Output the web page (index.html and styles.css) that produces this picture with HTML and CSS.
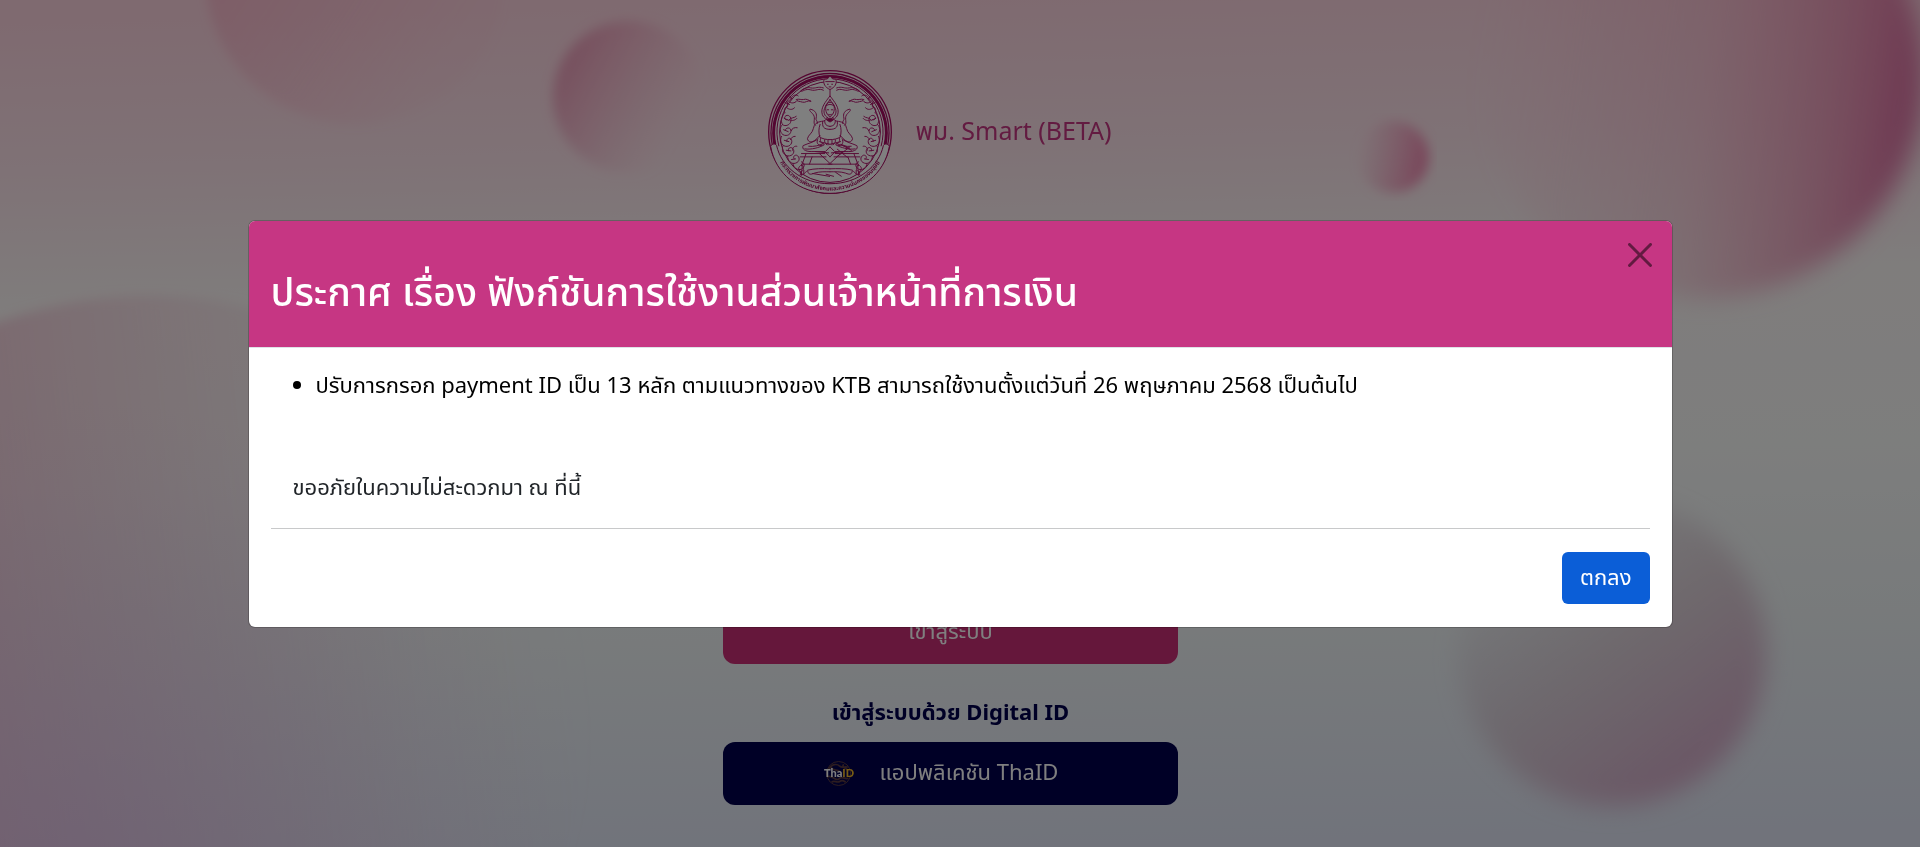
FILE: index.html
```html
<!DOCTYPE html>
<html lang="th">
<head>
<meta charset="utf-8">
<meta name="viewport" content="width=device-width, initial-scale=1">
<title>พม. Smart (BETA)</title>
<link rel="stylesheet" href="styles.css">
</head>
<body>
<svg class="backdrop-art" viewBox="0 0 1920 847" preserveAspectRatio="none" aria-hidden="true">
  <defs>
    <linearGradient id="sky" x1="0.47" y1="0" x2="0.53" y2="1">
      <stop offset="0" stop-color="#ffd5e1"/><stop offset="0.17" stop-color="#ffe4ec"/><stop offset="0.34" stop-color="#fffaf9"/><stop offset="0.55" stop-color="#fbfcfb"/><stop offset="0.75" stop-color="#f0f5f7"/><stop offset="1" stop-color="#e2e7f6"/>
    </linearGradient>
    <linearGradient id="orbA" x1="0.1" y1="0.3" x2="0.8" y2="0.75"><stop offset="0" stop-color="#f587a8" stop-opacity=".34"/><stop offset="1" stop-color="#f587a8" stop-opacity=".06"/></linearGradient>
    <linearGradient id="orbB" x1="0" y1="0.25" x2="0.85" y2="0.7"><stop offset="0" stop-color="#e06c98" stop-opacity=".6"/><stop offset="1" stop-color="#f4aac4" stop-opacity="0"/></linearGradient>
    <linearGradient id="orbC" x1="0" y1="0.4" x2="1" y2="0.6"><stop offset="0" stop-color="#f08cb4" stop-opacity="0"/><stop offset="1" stop-color="#f06ca0" stop-opacity=".8"/></linearGradient>
    <linearGradient id="orbD" x1="0" y1="0.38" x2="1" y2="0.52"><stop offset="0" stop-color="#f090b4" stop-opacity="0"/><stop offset=".5" stop-color="#f08cac" stop-opacity=".26"/><stop offset=".8" stop-color="#e474a0" stop-opacity=".6"/><stop offset="1" stop-color="#d8649c" stop-opacity=".92"/></linearGradient>
    <linearGradient id="orbE" x1="0" y1="0.55" x2="1" y2="0.45"><stop offset="0" stop-color="#f08cb0" stop-opacity=".6"/><stop offset=".2" stop-color="#f094b6" stop-opacity=".52"/><stop offset=".8" stop-color="#e8b8cc" stop-opacity=".08"/><stop offset="1" stop-color="#e8b8cc" stop-opacity="0"/></linearGradient>
    <linearGradient id="orbF" x1="0.2" y1="0.1" x2="0.8" y2="0.85"><stop offset="0" stop-color="#c8b8c4" stop-opacity="0"/><stop offset=".5" stop-color="#d0b8c4" stop-opacity=".55"/><stop offset="1" stop-color="#d4a4c4" stop-opacity=".85"/></linearGradient>
    <radialGradient id="violet"><stop offset="0" stop-color="#dcbcec" stop-opacity=".5"/><stop offset="1" stop-color="#e0c8ee" stop-opacity="0"/></radialGradient>
    <filter id="soft4"><feGaussianBlur stdDeviation="6"/></filter>
    <filter id="soft8"><feGaussianBlur stdDeviation="12"/></filter>
  </defs>
  <rect width="1920" height="847" fill="url(#sky)"/>
  <ellipse cx="150" cy="720" rx="440" ry="424" fill="url(#orbE)" filter="url(#soft4)"/>
  <circle cx="80" cy="880" r="480" fill="url(#violet)"/>
  <circle cx="355" cy="-26" r="150" fill="url(#orbA)" filter="url(#soft4)"/>
  <circle cx="629" cy="97" r="76" fill="url(#orbB)" filter="url(#soft4)"/>
  <circle cx="1393" cy="157" r="36" fill="url(#orbC)" filter="url(#soft4)"/>
  <circle cx="1702" cy="76" r="222" fill="url(#orbD)" filter="url(#soft8)"/>
  <circle cx="1612" cy="652" r="154" fill="url(#orbF)" filter="url(#soft8)"/>
</svg>

<main class="login">
  <header class="brand">
    <svg class="seal" viewBox="14 11 380 380" role="img" aria-label="ตรากระทรวง">
      <defs>
        <path id="motto" d="M38 262A177 177 0 0 0 370 262"/>
        <g id="half" fill="none" stroke="#b41a70" stroke-width="3" stroke-linecap="round" stroke-linejoin="round">
          <path d="M184 75c-14-8-22 4-38-1s-24 6-31 4c9-10 22-12 31-10 16 3 20-6 38 0M146 108c-10-4-16 6-25 3s-17-2-19-8c9-3 16 2 22 0 10-3 14 2 22 5M108 92c-8-7-21 0-22 12-8 0-14 10-9 19-9 2-14 12-9 20M81 110c5 5 17 5 22-2M72 126c8 9 19 9 25 2M66 144c-8 12-12 23-5 35 9 6 20 1 24-7 5-13-4-25-14-20-8 5-2 15 4 12M61 178c-10 9-9 23 1 31 13 7 26-2 24-14-2-9-16-8-17 1M58 214c-7 12-1 27 11 30 15 3 25-12 17-22-6-6-15 1-12 8M62 243c-5 14 1 27 14 30 17 2 24-14 15-23-7-5-15 0-12 8M76 274c0 14 12 25 24 21 14-4 14-20 3-24-8-1-12 7-6 12M92 296c2 13 14 22 26 17 11-6 11-20 0-22M102 154c-7 6-17 3-21 10 9 5 19 1 23-4M105 188c-8-2-16 2-18 9M99 214c-6-1-12 4-14 10M104 244c-7-2-14 4-13 12M66 160l14 6m-16 28l14 6m-12 26l14 4m-8 26l14 2m2 26l12-2m-24-190l12 8m-20 12l14 6"/>
          <path d="M114 303c-8 6-5 14 3 18 7-3 10-11 5-18zM118 321v10m7-14v11"/>
          <path d="M204 92c-13 18-30 36-23 57 4 10 12 16 23 17M204 103c-10 16-22 28-17 43 2 6 6 10 10 12M191 125c0-8 5-13 13-14M191 125c-1 14 4 27 13 30M196 134h4m-2 13c2 2 4 2 6 2M192 122c4-3 8-4 12-4"/>
          <path d="M196 157c-2 8-8 11-18 12-14 2-22 8-24 21-2 14-16 20-18 31 2 12 14 12 24 4l14-14M174 178c-5 13-4 26-1 38M182 169c-2 16 2 24 22 24M188 168c0 10 5 15 16 16M160 181c-10-7 2-20-6-32-8-10-14-12-10-17 16 3 22 15 18 27-2 8 6 8 4 16M173 216c8 6 20 8 31 8M168 222c-12 10-30 13-45 20-5 10 6 18 24 18h43l14-14M172 230l32 8M166 226c-4 9 4 17 14 16m-4-22c-4 9 2 16 10 18m2-14c-2 7 2 12 6 15m4-14v15M128 252c20 3 44-4 58-12M140 244c16 2 30-2 44-8"/>
          <path d="M118 266h70M114 276h78M132 266l-12 32h90M190 262l14 14M172 266l32 30M150 276l-8 22M118 298c6 12-1 20-4 32 12 2 15-8 23-14 20-5 43-5 67-4M137 320c2 10 8 10 20 5 15-5 31-4 47-4M160 260l40 4"/>
        </g>
      </defs>
      <circle cx="204" cy="201" r="181" fill="#ffffff"/>
      <g fill="none" stroke="#a80c62">
        <circle cx="204" cy="201" r="185" stroke-width="4"/>
        <path d="M30 240A178 178 0 1 1 378 240" stroke-width="4"/>
        <path d="M38 240A170 170 0 1 1 370 240" stroke-width="9"/>
        <path d="M50 244A160 160 0 1 1 358 244" stroke-width="3"/>
        <circle cx="204" cy="201" r="152" stroke-width="3"/>
      </g>
      <path d="M25 244c4-8 14-9 18-2 14 62 74 115 161 115s147-53 161-115c4-7 14-6 18 2-14 83-86 142-179 142S39 327 25 244z" fill="#ffffff" stroke="#a80c62" stroke-width="3"/>
      <use href="#half"/>
      <use href="#half" transform="translate(408 0) scale(-1 1)"/>
      <g fill="none" stroke="#b41a70" stroke-width="3">
        <path fill="#ffffff" d="M204 32l-8 9-10 1c-3 14 3 24 18 31 15-7 21-17 18-31l-10-1z"/>
        <path d="M190 49h28M195 57h5m8 0h5m-13 8h8M204 73v18"/>
        <path fill="#a80f60" d="M198 160h12l4 5-10 6-10-6z"/>
        <path d="M236 238l27 15m-38-1l32 26m-20-40c13 5 24 9 33 21M224 276l40-30M150 326l54 9m-13-7l25 7m4-13l19 13"/>
      </g>
      <text class="seal-text"><textPath href="#motto" startOffset="50%" text-anchor="middle">กระทรวงการพัฒนาสังคมและความมั่นคงของมนุษย์</textPath></text>
    </svg>
    <h1 class="brand-name">พม. Smart (BETA)</h1>
  </header>
  <div class="actions">
    <button class="btn btn-login" type="button">เข้าสู่ระบบ</button>
    <h2 class="digital-title">เข้าสู่ระบบด้วย Digital ID</h2>
    <button class="btn btn-thaid" type="button">
      <svg class="thaid-logo" viewBox="0 0 96 80" aria-hidden="true">
        <g fill="none" stroke="#5a3a40" stroke-width="5">
          <circle cx="47" cy="40" r="36" stroke-width="3"/>
          <path d="M16 30c10-20 26-20 34-12s20-2 24 4M14 50c12-8 24 16 34 6s20 4 28-2M26 66c8-8 16 4 24-2s12-2 18 2M24 22c8 12 18 4 26 12M62 12c-8 10 8 12 14 20"/>
        </g>
        <text class="thaid-mark" x="48" y="50" text-anchor="middle">Tha<tspan class="thaid-gold">ID</tspan></text>
      </svg>
      <span>แอปพลิเคชัน ThaID</span>
    </button>
  </div>
</main>

<div class="overlay">
  <section class="modal" role="dialog" aria-modal="true" aria-labelledby="notice-title">
    <header class="modal-header">
      <h2 class="modal-title" id="notice-title">ประกาศ เรื่อง ฟังก์ชันการใช้งานส่วนเจ้าหน้าที่การเงิน</h2>
      <button class="close" type="button" aria-label="ปิด">
        <svg viewBox="0 0 16 16" aria-hidden="true"><path d="M.293.293a1 1 0 0 1 1.414 0L8 6.586 14.293.293a1 1 0 1 1 1.414 1.414L9.414 8l6.293 6.293a1 1 0 0 1-1.414 1.414L8 9.414l-6.293 6.293a1 1 0 0 1-1.414-1.414L6.586 8 .293 1.707a1 1 0 0 1 0-1.414z"/></svg>
      </button>
    </header>
    <div class="modal-body">
      <ul class="notice-list">
        <li>ปรับการกรอก payment ID เป็น 13 หลัก ตามแนวทางของ KTB สามารถใช้งานตั้งแต่วันที่ 26 พฤษภาคม 2568 เป็นต้นไป</li>
      </ul>
      <p class="apology">ขออภัยในความไม่สะดวกมา ณ ที่นี้</p>
      <hr class="rule">
      <div class="modal-actions">
        <button class="btn-ok" type="button">ตกลง</button>
      </div>
    </div>
  </section>
</div>
</body>
</html>
```
FILE: styles.css
```css
* {
  box-sizing: border-box;
}

body {
  margin: 0;
  min-height: 100vh;
  overflow: hidden;
  font-family: "Noto Sans", "Noto Sans Thai", sans-serif;
  font-size: 22px;
  line-height: 34px;
  color: #212529;
}

h1, h2, p, ul {
  margin: 0;
}

button {
  font: inherit;
  border: 0;
  cursor: pointer;
}

.backdrop-art {
  position: fixed;
  inset: 0;
  width: 100%;
  height: 100%;
}

.login {
  position: relative;
  display: flex;
  flex-direction: column;
  align-items: center;
  justify-content: space-between;
  min-height: 100vh;
  padding: 69px 19px 42px 0;
}

.brand {
  display: flex;
  align-items: center;
  gap: 22px;
  padding-right: 22px;
}

.seal {
  width: 126px;
  height: 126px;
}

.seal-text {
  font-size: 17px;
  font-weight: 700;
  fill: #a80f60;
}

.brand-name {
  padding-bottom: 4px;
  font-size: 25px;
  font-weight: 400;
  color: #c63683;
}

.actions {
  display: flex;
  flex-direction: column;
  align-items: stretch;
  width: 455px;
}

.btn {
  display: flex;
  align-items: center;
  justify-content: center;
  height: 63px;
  padding: 0 0 6px;
  border-radius: 12px;
  color: #ffffff;
}

.btn-login {
  background: #ca2e76;
}

.digital-title {
  margin: 30px 0 14px;
  font-size: 22px;
  font-weight: 700;
  text-align: center;
  color: #00004c;
}

.btn-thaid {
  gap: 25px;
  padding-right: 20px;
  background: #00004c;
}

.thaid-logo {
  width: 32px;
  height: 27px;
  margin-top: 5px;
  overflow: visible;
}

.thaid-mark {
  font-family: Lato, sans-serif;
  font-size: 33px;
  font-weight: 900;
  fill: #ffffff;
}

.thaid-gold {
  fill: #f0b828;
}

.overlay {
  position: fixed;
  inset: 0;
  display: flex;
  align-items: center;
  justify-content: center;
  background: rgba(0, 0, 0, 0.5);
}

.modal {
  width: calc(100% - 495px);
  border: 1px solid rgba(0, 0, 0, 0.2);
  border-radius: 7px;
  background: #ffffff;
  background-clip: padding-box;
  overflow: hidden;
}

.modal-header {
  display: flex;
  align-items: flex-start;
  justify-content: space-between;
  padding: 22px 20px 26px 22px;
  border-bottom: 1px solid #dee2e6;
  background: #c63683;
}

.modal-title {
  padding-top: 18px;
  font-size: 39px;
  font-weight: 500;
  line-height: 60px;
  color: #ffffff;
}

.close {
  display: flex;
  padding: 0;
  background: none;
  opacity: 0.5;
}

.close svg {
  width: 24px;
  height: 24px;
}

.modal-body {
  padding: 19px 22px 23px;
}

.notice-list {
  padding-left: 45px;
  color: #000000;
}

.apology {
  margin-top: 68px;
  padding-left: 22px;
}

.rule {
  margin: 25px 0 23px;
  border: 0;
  border-top: 1px solid #c8c9ca;
}

.modal-actions {
  display: flex;
  justify-content: flex-end;
}

.btn-ok {
  padding: 7px 18px 11px;
  border-radius: 6px;
  background: #0b5ed7;
  color: #ffffff;
}
```
